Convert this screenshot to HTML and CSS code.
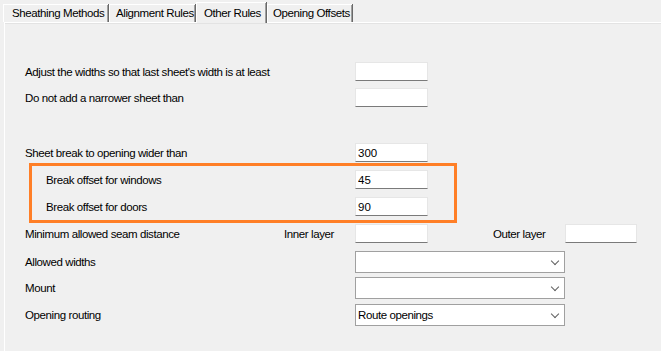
FILE: index.html
```html
<!DOCTYPE html>
<html>
<head>
<meta charset="utf-8">
<title>Other Rules</title>
<link rel="stylesheet" href="styles.css">
</head>
<body>

<div class="tabs">
   <div class="tab t1">Sheathing Methods</div>
   <div class="tab t2">Alignment Rules</div>
   <div class="tab t3 active">Other Rules</div>
   <div class="tab t4">Opening Offsets</div>
</div>

<div class="panel">

   <div class="row r1">
      <span class="label">Adjust the widths so that last sheet's width is at least</span>
      <input class="box" type="text" value="">
   </div>
   <div class="row r2">
      <span class="label">Do not add a narrower sheet than</span>
      <input class="box" type="text" value="">
   </div>

   <div class="row r3">
      <span class="label">Sheet break to opening wider than</span>
      <input class="box" type="text" value="300">
   </div>

   <div class="highlight">
      <div class="row">
         <span class="label inner">Break offset for windows</span>
         <input class="box" type="text" value="45">
      </div>
      <div class="row r5">
         <span class="label inner">Break offset for doors</span>
         <input class="box" type="text" value="90">
      </div>
   </div>

   <div class="row seam">
      <span class="label seam-label">Minimum allowed seam distance</span>
      <span class="sub">Inner layer</span>
      <input class="box" type="text" value="">
      <span class="sub outer">Outer layer</span>
      <input class="box small" type="text" value="">
   </div>

   <div class="row r7">
      <span class="label">Allowed widths</span>
      <div class="combo"><span class="val"></span><span class="arrow"></span></div>
   </div>
   <div class="row r8">
      <span class="label">Mount</span>
      <div class="combo"><span class="val"></span><span class="arrow"></span></div>
   </div>
   <div class="row r9">
      <span class="label">Opening routing</span>
      <div class="combo"><span class="val">Route openings</span><span class="arrow"></span></div>
   </div>

</div>

</body>
</html>
```

FILE: styles.css
```css
html, body {margin:0; padding:0;}
body {background:#f0f0f0; font-family:"Liberation Sans", Arial, sans-serif; font-size:11.5px; letter-spacing:-0.4px; color:#000; width:661px; height:351px; overflow:hidden;}

/* tab strip */
.tabs {display:flex; align-items:flex-end; height:22px; padding-left:3px;}
.tab {height:18px; line-height:17px; box-sizing:border-box; border-top:1px solid #fff; border-left:1px solid #fff; box-shadow:inset -1px 0 0 #a0a0a0, 1px 0 0 #696969; margin-right:1px; white-space:nowrap; padding-left:6px; flex:none;}
.tab.active {height:21px; line-height:21px; margin-bottom:-1px; background:#f0f0f0; position:relative; z-index:1;}
.t1 {width:105px; padding-left:8px;}
.t2 {width:86px;}
.t3 {width:70px; padding-left:7px;}
.t4 {width:85px; padding-left:5px;}

/* page */
.panel {margin-left:4px; height:329px; border-top:1px solid #fff; border-left:1px solid #fff; box-shadow:inset 0 1px 0 #e3e3e3; box-sizing:border-box; padding-left:20px;}

.row {display:flex; align-items:center;}
.label {width:330px; flex:none; white-space:nowrap;}
.label.inner {width:309px;}

.box {width:73px; height:19px; box-sizing:border-box; margin:0; padding:0 2px; border:1px solid #e6e6e6; border-bottom:1px solid #7a7a7a; background:#fff; font:inherit; color:#000; outline:none;}

.r1 {margin-top:39px;}
.r2 {margin-top:7px;}
.r3 {margin-top:36px;}
.r5 {margin-top:8px;}

.highlight {margin:1px 0 0 4px; width:428px; box-sizing:border-box; border:3px solid #ff7f27; padding:4px 0 4px 14px;}

.seam {margin-top:1px;}
.seam-label {width:259px;}
.sub {width:71px; flex:none; white-space:nowrap;}
.sub.outer {margin-left:65px; width:72px;}
.box.small {width:72px;}

.combo {width:210px; height:22px; box-sizing:border-box; border:1px solid #a0a0a0; background:#fff; display:flex; align-items:center; justify-content:space-between; padding:0 6px 0 2px;}
.val {white-space:nowrap;}
.arrow {width:5px; height:5px; border-right:1px solid #606060; border-bottom:1px solid #606060; transform:rotate(45deg); margin-top:-3px;}

.r7 {margin-top:8px;}
.r8 {margin-top:4px;}
.r9 {margin-top:5px;}
```
